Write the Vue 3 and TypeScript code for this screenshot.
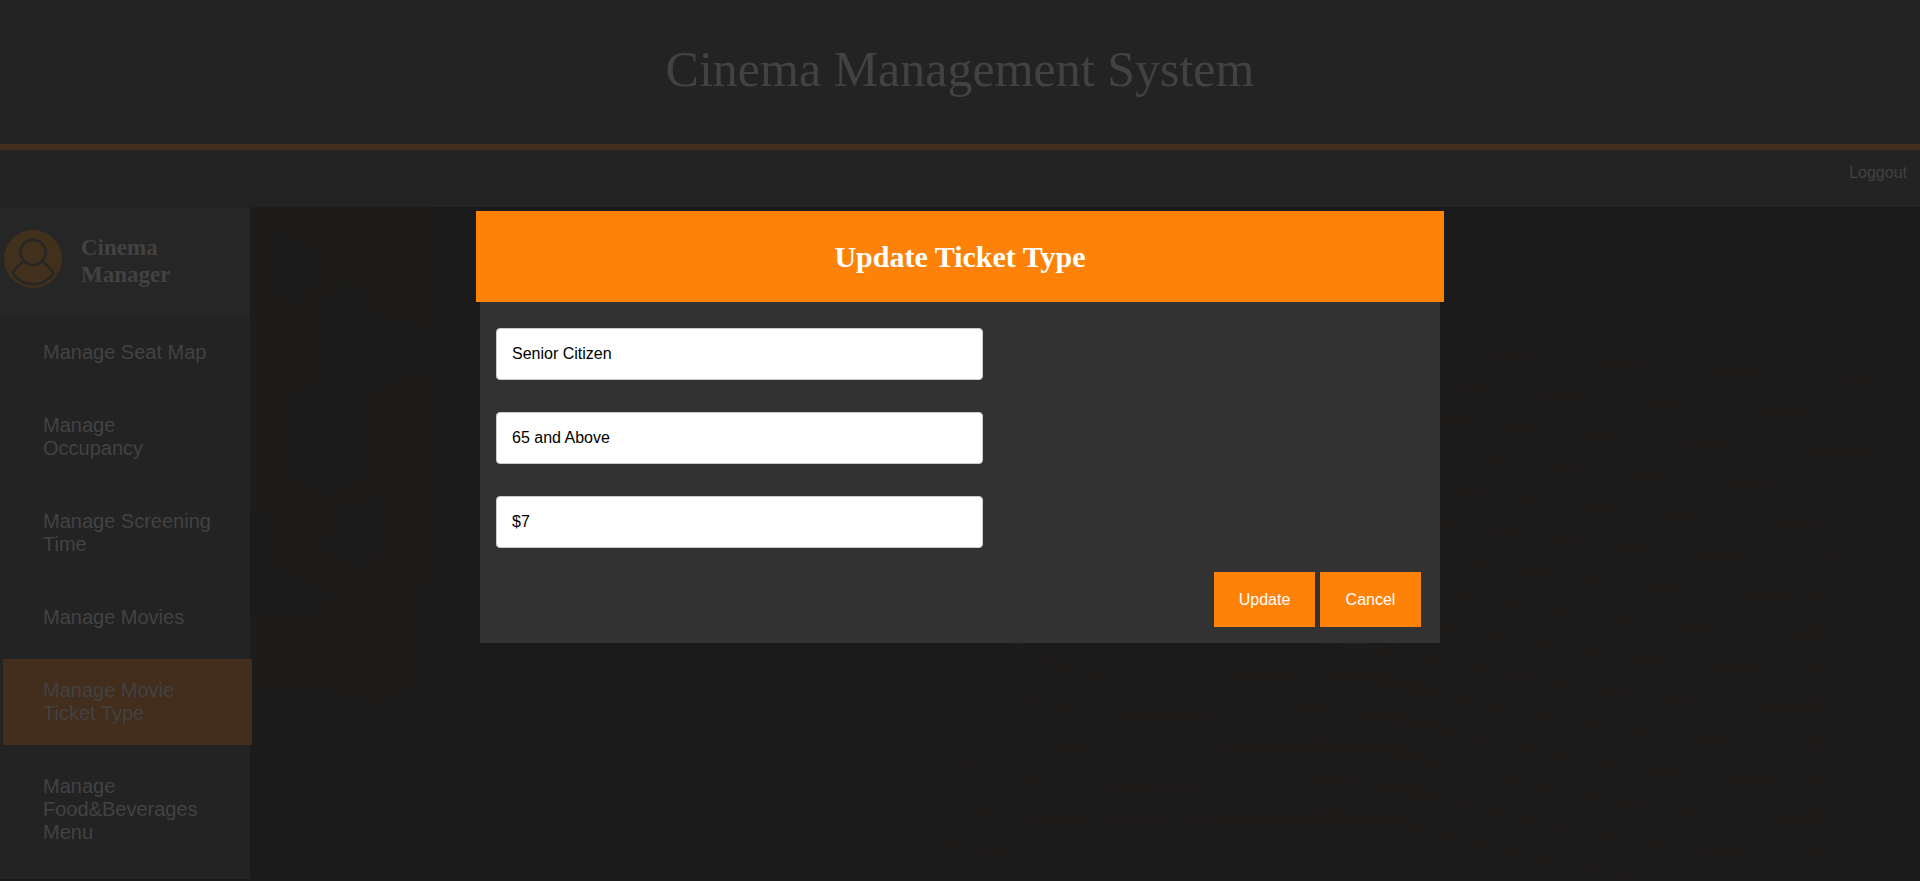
<script setup lang="ts">
import { ref } from 'vue'

interface MenuItem {
  label: string
  active: boolean
}

const menu: MenuItem[] = [
  { label: 'Manage Seat Map', active: false },
  { label: 'Manage Occupancy', active: false },
  { label: 'Manage Screening Time', active: false },
  { label: 'Manage Movies', active: false },
  { label: 'Manage Movie Ticket Type', active: true },
  { label: 'Manage Food&Beverages Menu', active: false },
]

const ticketName = ref('Senior Citizen')
const ageRange = ref('65 and Above')
const price = ref('$7')

const upperWaves = [0, 1, 2, 3, 4, 5, 6, 7, 8, 9, 10, 11, 12, 13, 14]
const upperWavePath = (i: number): string => {
  const left = 330 + i * 34
  const right = 375 + i * 37
  const end = Math.max(1920 - i * 20, 1800)
  return `M1300 ${left} C1450 ${left + 25} 1600 ${right - 12} 1720 ${right - 4} S1860 ${right + 6} ${end} ${right - (i > 4 ? 12 : 0)}`
}
const lowerWaves = [0, 1, 2, 3, 4, 5]
const lowerWavePath = (i: number): string => {
  const x = 1010 - i * 25
  const y = 640 + i * 35
  return `M${x} ${y} C${x + 60} ${y + 40} ${x + 110} ${y + 45} 1240 ${677 + i * 36} S1400 ${675 + i * 36} 1440 ${690 + i * 36}`
}
</script>

<template>
  <div class="page">
    <header class="banner">
      <h1>Cinema Management System</h1>
    </header>
    <nav class="topbar">
      <a href="#logout">Loggout</a>
    </nav>
    <div class="content">
      <svg class="backdrop" viewBox="0 207 1920 674" preserveAspectRatio="xMaxYMin slice" aria-hidden="true">
        <path fill="#1e1c1b" d="M250 207 H434 V570 L426 590 L428 690 L370 705 L310 690 L250 695 Z" />
        <g fill="#1b1b1b">
          <path d="M277 236 L288 236 L320 258 L308 288 L294 302 L270 290 Z" />
          <path d="M334 290 L354 284 L374 320 L434 330 V375 L385 378 L362 395 L355 480 L330 494 L292 470 L296 400 L320 380 L324 340 Z" />
          <path d="M250 515 L264 510 L268 568 L330 594 L310 615 L250 612 Z" />
          <path d="M340 510 L376 498 L385 525 L362 570 L330 545 Z" />
        </g>
        <g fill="none" stroke="#1e1b1b" stroke-width="9">
          <path v-for="i in upperWaves" :key="'u' + i" :d="upperWavePath(i)" />
          <path v-for="i in lowerWaves" :key="'l' + i" :d="lowerWavePath(i)" />
        </g>
      </svg>
      <aside class="sidebar">
        <div class="profile">
          <svg class="avatar" viewBox="0 0 58 58" aria-hidden="true">
            <circle cx="29" cy="29" r="29" fill="#41301c" />
            <g fill="none" stroke="#262626" stroke-width="2.4" stroke-linejoin="round">
              <circle cx="29" cy="22.3" r="12.6" />
              <path d="M19.5 32 C14 35 11 39 8.6 43.2 C19 58 39 58 49.4 43.2 C47 39 44 35 38.5 32" />
            </g>
          </svg>
          <h3>Cinema Manager</h3>
        </div>
        <ul class="menu">
          <li v-for="item in menu" :key="item.label">
            <a href="#" :class="{ active: item.active }">{{ item.label }}</a>
          </li>
        </ul>
      </aside>
    </div>

    <div class="overlay">
      <form class="dialog" role="dialog" aria-labelledby="dialog-title" @submit.prevent>
        <h2 id="dialog-title">Update Ticket Type</h2>
        <div class="fields">
          <input v-model="ticketName" type="text" aria-label="Ticket type" />
          <input v-model="ageRange" type="text" aria-label="Age range" />
          <input v-model="price" type="text" aria-label="Price" />
        </div>
        <div class="actions">
          <button type="submit">Update</button>
          <button type="button">Cancel</button>
        </div>
      </form>
    </div>
  </div>
</template>

<style>
body {
  margin: 0;
  background: #1b1b1b;
}
</style>

<style scoped>
.page {
  position: relative;
  display: flex;
  flex-direction: column;
  min-height: 100vh;
  box-sizing: border-box;
  padding-bottom: 2px;
  background: #1b1b1b;
  color: #424242;
  font-family: "Liberation Sans", Arial, sans-serif;
}
.banner {
  padding: 40px 0 46px;
  background: #232323;
  border-bottom: 6px solid #432d1c;
  text-align: center;
}
.banner h1 {
  margin: 0;
  font: 50px/58px "Liberation Serif", "Times New Roman", serif;
}
.topbar {
  display: flex;
  justify-content: flex-end;
  padding: 13px 13px 24px;
  background: #232323;
}
.topbar a {
  color: #424242;
  font-size: 16px;
  line-height: 20px;
  text-decoration: none;
}
.content {
  position: relative;
  display: flex;
  flex: 1;
}
.backdrop {
  position: absolute;
  inset: 0;
  width: 100%;
  height: 100%;
}
.sidebar {
  position: relative;
  width: 250px;
  background: #232323;
}
.profile {
  display: flex;
  align-items: center;
  gap: 19px;
  padding: 23px 4px 28px;
  background: #262626;
}
.avatar {
  flex: none;
  width: 58px;
  height: 58px;
}
.profile h3 {
  width: 110px;
  margin: 0;
  padding-top: 4px;
  font: bold 23px/27px "Liberation Serif", "Times New Roman", serif;
}
.menu {
  display: flex;
  flex-direction: column;
  gap: 10px;
  width: 249px;
  margin: 5px 0 15px 3px;
  padding: 0;
  list-style: none;
}
.menu a {
  display: block;
  padding: 20px 40px;
  color: #424242;
  font-size: 20px;
  line-height: 23px;
  text-decoration: none;
}
.menu .active {
  background: #432d1c;
}
.overlay {
  position: absolute;
  inset: 0;
  display: flex;
  align-items: flex-start;
  justify-content: center;
  padding-top: 211px;
}
.dialog {
  width: 50%;
  background: #323232;
}
.dialog h2 {
  margin: 0 -4px;
  padding: 28px 0;
  background: #ff8208;
  color: #fff;
  font: bold 30px/35px "Liberation Serif", "Times New Roman", serif;
  text-align: center;
}
.fields {
  display: flex;
  flex-direction: column;
  gap: 32px;
  padding: 26px 16px 24px;
}
.fields input {
  width: 100%;
  max-width: 487px;
  box-sizing: border-box;
  padding: 16px 15px;
  border: 1px solid #ccc;
  border-radius: 4px;
  background: #fff;
  color: #000;
  font: 16px/18px "Liberation Sans", Arial, sans-serif;
}
.actions {
  display: flex;
  justify-content: flex-end;
  gap: 5px;
  padding: 0 19px 16px;
}
.actions button {
  min-width: 101px;
  padding: 18px 20px;
  border: 0;
  background: #ff8208;
  color: #fff;
  font: 16px/19px "Liberation Sans", Arial, sans-serif;
}
</style>
